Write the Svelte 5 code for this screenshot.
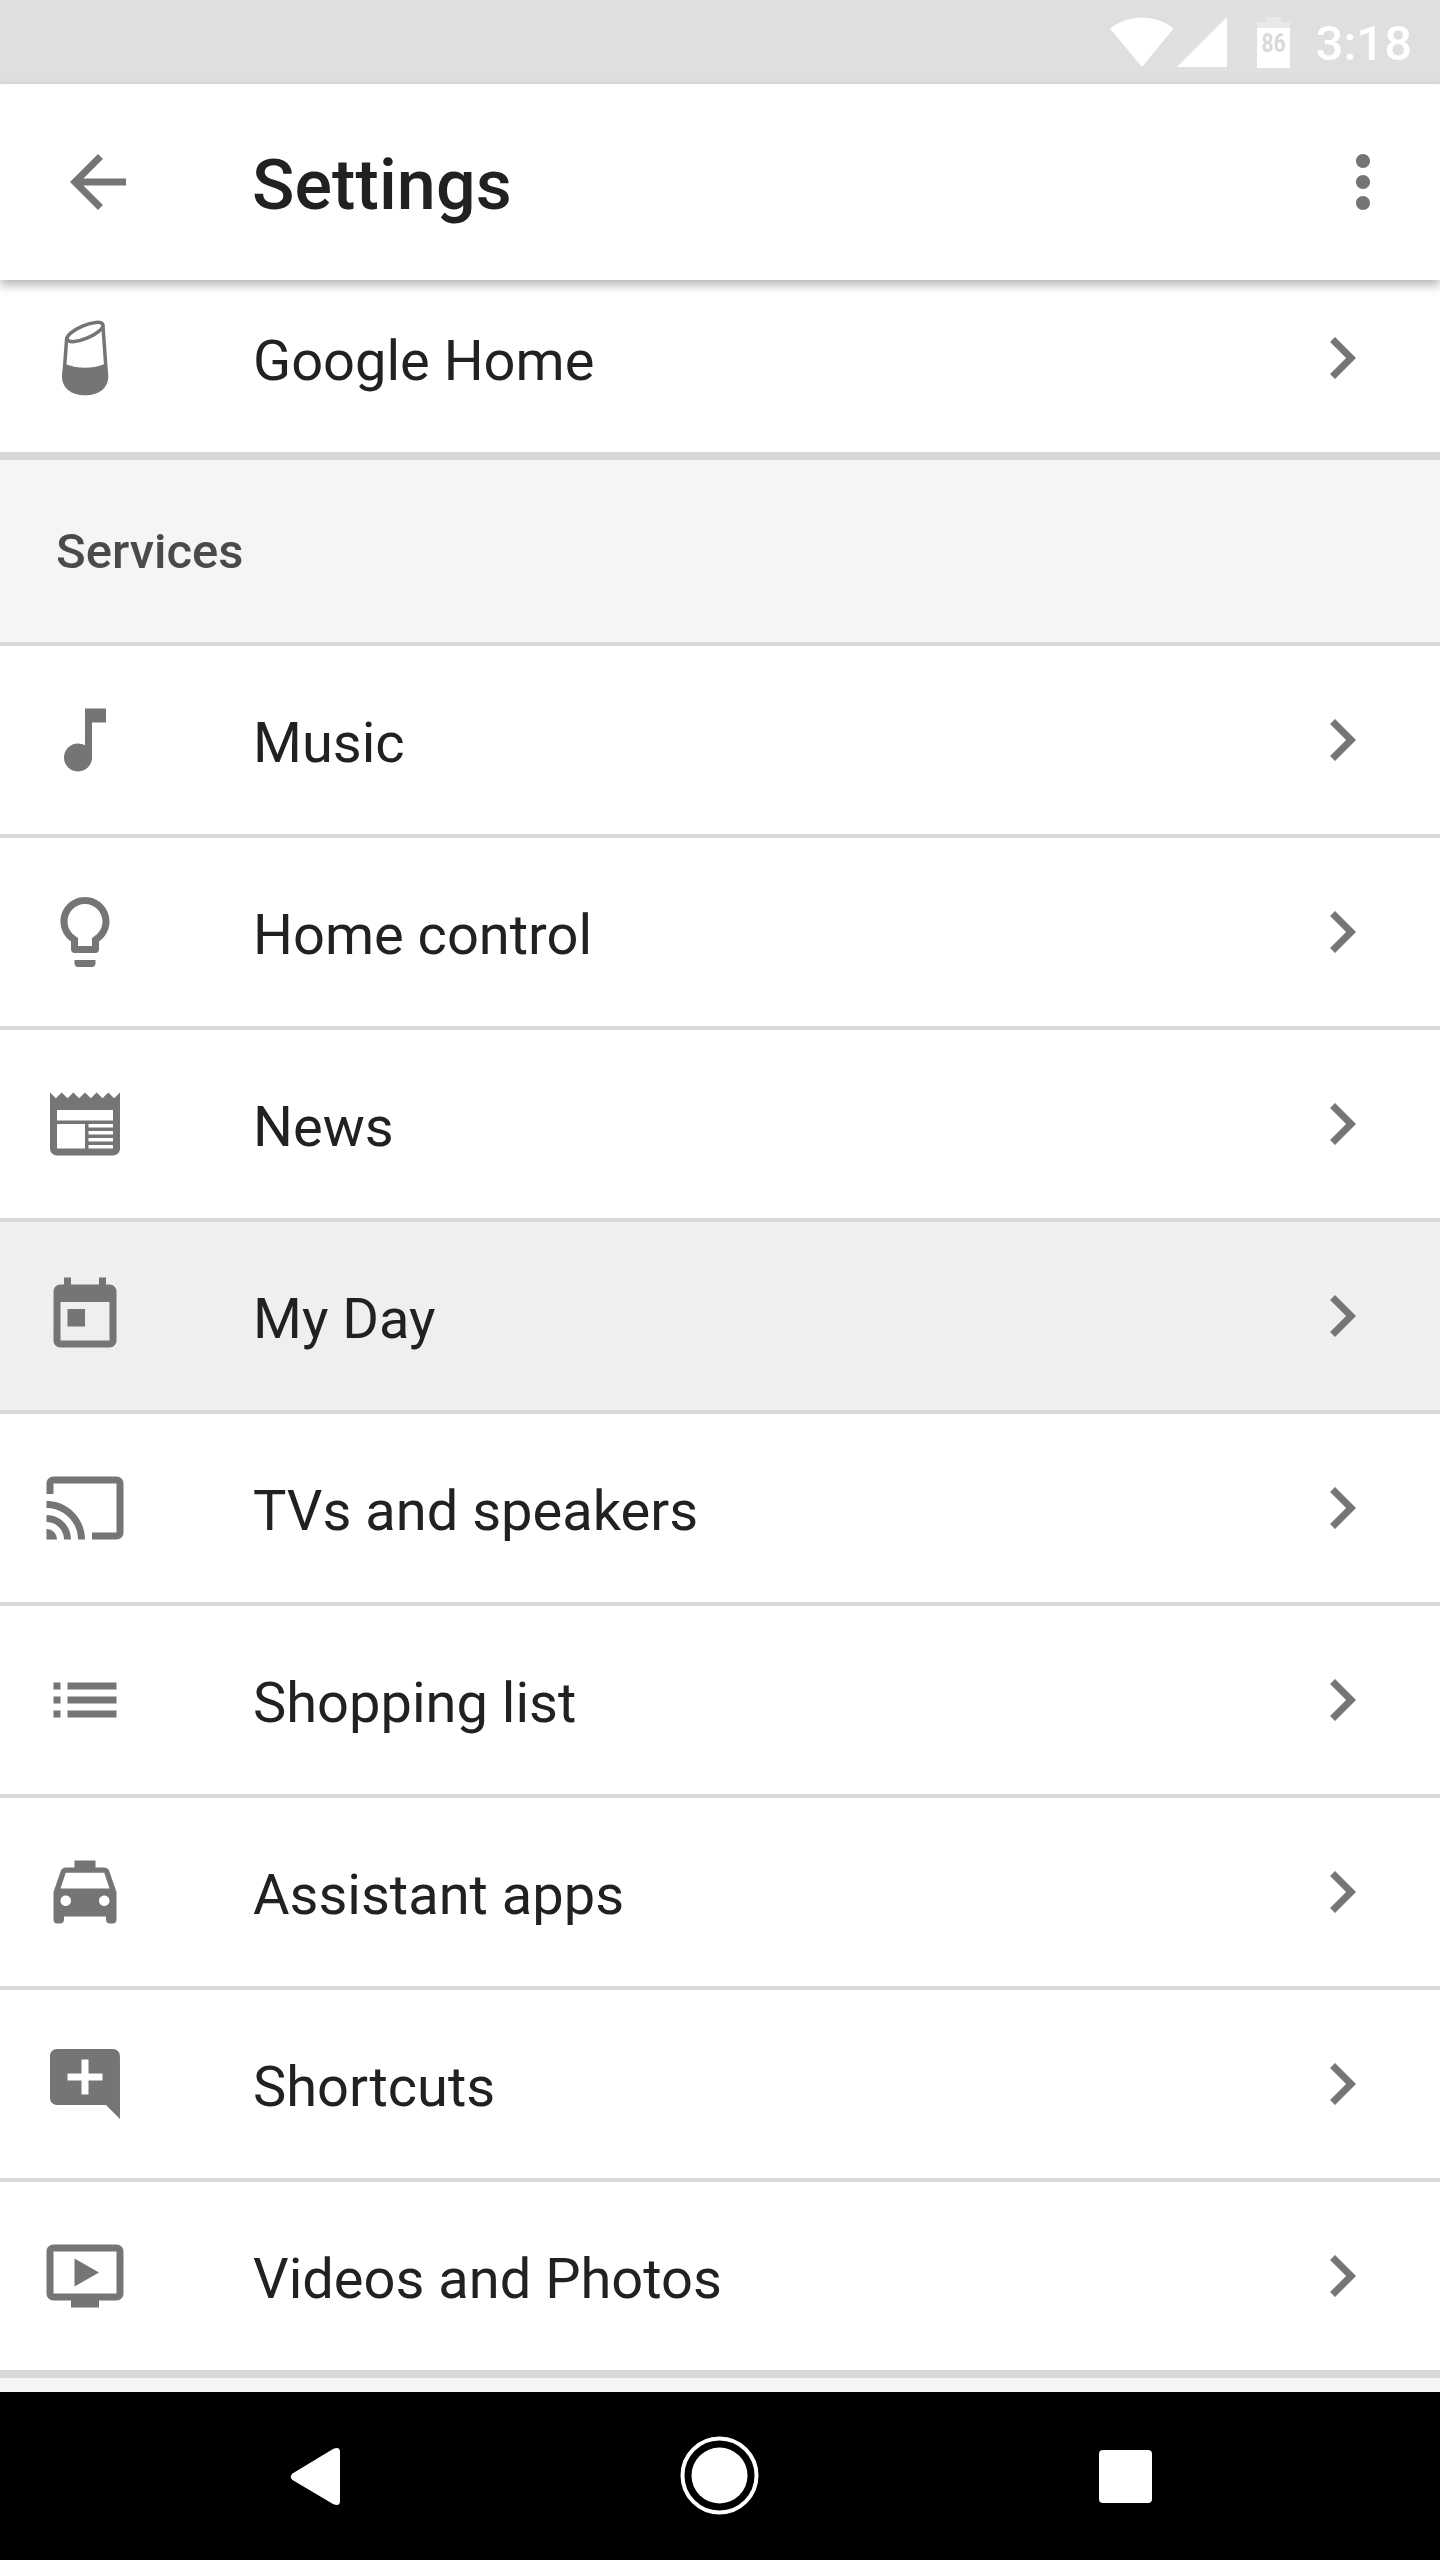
<script>
  const services = [
    { label: 'Music', icon: 'M12 3v10.55c-.59-.34-1.27-.55-2-.55-2.21 0-4 1.79-4 4s1.79 4 4 4 4-1.79 4-4V7h4V3h-6z' },
    { label: 'Home control', icon: 'M9 21c0 .55.45 1 1 1h4c.55 0 1-.45 1-1v-1H9v1zm3-19C8.14 2 5 5.14 5 9c0 2.38 1.19 4.47 3 5.74V17c0 .55.45 1 1 1h6c.55 0 1-.45 1-1v-2.26c1.81-1.27 3-3.36 3-5.74 0-3.86-3.14-7-7-7zm2.85 11.1l-.85.6V16h-4v-2.3l-.85-.6C7.8 12.16 7 10.63 7 9c0-2.76 2.24-5 5-5s5 2.24 5 5c0 1.63-.8 3.16-2.15 4.1z' },
    { label: 'News', icon: 'M22 3l-1.67 1.67L18.67 3 17 4.67 15.33 3l-1.66 1.67L12 3l-1.67 1.67L8.67 3 7 4.67 5.33 3 3.67 4.67 2 3v16c0 1.1.9 2 2 2h16c1.1 0 2-.9 2-2V3zM4 8h16v3H4V8zm0 4h8v7H4v-7zm9 0h7v1h-7v-1zm0 2h7v1h-7v-1zm0 2h7v1h-7v-1zm0 2h7v1h-7v-1z' },
    { label: 'My Day', icon: 'M19 3h-1V1h-2v2H8V1H6v2H5c-1.11 0-1.99.9-1.99 2L3 19c0 1.1.89 2 2 2h14c1.1 0 2-.9 2-2V5c0-1.1-.9-2-2-2zm0 16H5V8h14v11zM7 10h5v5H7z', pressed: true },
    { label: 'TVs and speakers', icon: 'M21 3H3c-1.1 0-2 .9-2 2v3h2V5h18v14h-7v2h7c1.1 0 2-.9 2-2V5c0-1.1-.9-2-2-2zM1 18v3h3c0-1.66-1.34-3-3-3zm0-4v2c2.76 0 5 2.24 5 5h2c0-3.87-3.13-7-7-7zm0-4v2c4.97 0 9 4.03 9 9h2c0-6.08-4.93-11-11-11z' },
    { label: 'Shopping list', icon: 'M3 13h2v-2H3v2zm0 4h2v-2H3v2zm0-8h2V7H3v2zm4 4h14v-2H7v2zm0 4h14v-2H7v2zM7 7v2h14V7H7z' },
    { label: 'Assistant apps', icon: 'M18.92 6.01C18.72 5.42 18.16 5 17.5 5H15V3H9v2H6.5c-.66 0-1.21.42-1.42 1.01L3 12v8c0 .55.45 1 1 1h1c.55 0 1-.45 1-1v-1h12v1c0 .55.45 1 1 1h1c.55 0 1-.45 1-1v-8l-2.08-5.99zM6.5 16c-.83 0-1.5-.67-1.5-1.5S5.67 13 6.5 13s1.5.67 1.5 1.5S7.33 16 6.5 16zm11 0c-.83 0-1.5-.67-1.5-1.5s.67-1.5 1.5-1.5 1.5.67 1.5 1.5-.67 1.5-1.5 1.5zM5 11l1.5-4.5h11L19 11H5z' },
    { label: 'Shortcuts', icon: 'M21.99 4c0-1.1-.89-2-1.99-2H4c-1.1 0-2 .9-2 2v12c0 1.1.9 2 2 2h14l4 4-.01-18zM17 11h-4v4h-2v-4H7V9h4V5h2v4h4v2z' },
    { label: 'Videos and Photos', icon: 'M21 3H3c-1.11 0-2 .89-2 2v12c0 1.1.89 2 2 2h5v2h8v-2h5c1.1 0 1.99-.9 1.99-2L23 5c0-1.11-.9-2-2-2zm0 14H3V5h18v12zm-5-6l-7 4V7z' }
  ];
</script>

{#snippet chevron()}
  <svg class="icon" viewBox="0 0 24 24">
    <path d="M10 6L8.59 7.41 13.17 12l-4.58 4.59L10 18l6-6z" />
  </svg>
{/snippet}

<div class="screen">
  <div class="status-bar">
    <svg class="wifi" viewBox="0 0 64 50">
      <path d="M0 11.5Q14 .5 32 .5T63.5 11.5L32 50z" />
    </svg>
    <svg class="signal" viewBox="0 0 50 50">
      <path d="M50 0v50H0z" />
    </svg>
    <svg class="battery" viewBox="0 0 33 51">
      <path class="battery-empty" d="M9 0h15v5h9v7H0V5h9z" />
      <path d="M0 11h33v40H0z" />
      <text x="16.5" y="34.5" text-anchor="middle" textLength="24" lengthAdjust="spacingAndGlyphs">86</text>
    </svg>
    <span class="clock">3:18</span>
  </div>

  <header class="app-bar">
    <svg class="icon" viewBox="0 0 24 24">
      <path d="M20 11H7.83l5.59-5.59L12 4l-8 8 8 8 1.41-1.41L7.83 13H20v-2z" />
    </svg>
    <h1 class="title">Settings</h1>
    <svg class="icon" viewBox="0 0 24 24">
      <path d="M12 8c1.1 0 2-.9 2-2s-.9-2-2-2-2 .9-2 2 .9 2 2 2zm0 2c-1.1 0-2 .9-2 2s.9 2 2 2 2-.9 2-2-.9-2-2-2zm0 6c-1.1 0-2 .9-2 2s.9 2 2 2 2-.9 2-2-.9-2-2-2z" />
    </svg>
  </header>

  <main class="content">
    <div class="row device">
      <svg class="icon" viewBox="0 0 84 84">
        <path d="M20.5 47.500Q42 56 63.500 47.500L65.300 60.500C65.300 72 56 79.300 42.200 79.300S19 72 19 60.500z" />
        <path class="outline" d="M23.800 21L20.900 60M59.900 9L63.500 60" />
        <ellipse class="outline" cx="42" cy="16" rx="19.300" ry="6.500" transform="rotate(-23 42 16)" />
      </svg>
      <span class="label">Google Home</span>
      {@render chevron()}
    </div>

    <h2 class="section">Services</h2>

    {#each services as service}
      <div class="row" class:pressed={service.pressed}>
        <svg class="icon" viewBox="0 0 24 24">
          <path fill-rule="evenodd" d={service.icon} />
        </svg>
        <span class="label">{service.label}</span>
        {@render chevron()}
      </div>
    {/each}
  </main>

  <nav class="nav-bar">
    <svg viewBox="0 0 80 80">
      <path d="M17.500 37.500L58 13q7-3 7 3v49q0 6-7 3L17.500 44q-3.500-3.200 0-6.500z" />
    </svg>
    <svg viewBox="0 0 80 80">
      <circle class="ring" cx="39.500" cy="39.500" r="37" />
      <circle cx="39.500" cy="39.500" r="28" />
    </svg>
    <svg viewBox="0 0 80 80">
      <rect x="14" y="14" width="53" height="53" rx="4" />
    </svg>
  </nav>
</div>

<style>
  :global(body) {
    margin: 0;
    background: #f5f5f5;
  }

  .screen {
    display: flex;
    flex-direction: column;
    width: 1440px;
    height: 2560px;
    overflow: hidden;
    font-family: Roboto, sans-serif;
    color: #212121;
    background: #f5f5f5;
  }

  .status-bar {
    display: flex;
    flex-shrink: 0;
    align-items: center;
    justify-content: flex-end;
    box-sizing: border-box;
    height: 84px;
    padding-right: 28px;
    background: #dfdfdf;
    fill: #fff;
    color: #fff;
  }

  .wifi {
    width: 64px;
    height: 50px;
    margin-right: 3px;
  }

  .signal {
    width: 50px;
    height: 50px;
    margin-right: 30px;
  }

  .battery {
    width: 33px;
    height: 51px;
    margin-right: 26px;
  }

  .battery-empty {
    fill: #e9e9e9;
  }

  .battery text {
    font-size: 25px;
    font-weight: 700;
    fill: #d9d9d9;
  }

  .clock {
    padding-top: 3px;
    font-size: 49px;
    font-weight: 500;
    line-height: 1;
  }

  .app-bar {
    position: relative;
    z-index: 1;
    display: flex;
    flex-shrink: 0;
    align-items: center;
    box-sizing: border-box;
    height: 196px;
    padding: 0 35px 0 56px;
    background: #fff;
    box-shadow: 0 5px 10px rgba(0, 0, 0, 0.3);
  }

  .icon {
    flex-shrink: 0;
    width: 84px;
    height: 84px;
    fill: #757575;
  }

  .outline {
    fill: none;
    stroke: #757575;
    stroke-width: 3.5;
  }

  .title {
    flex: 1;
    margin: 0;
    padding: 6px 0 0 112px;
    font-size: 70px;
    font-weight: 500;
    line-height: 84px;
    letter-spacing: 0.1px;
  }

  .content {
    flex: 1;
    min-height: 0;
    overflow: hidden;
  }

  .row {
    display: flex;
    align-items: center;
    height: 188px;
    padding: 0 56px 0 43px;
    border-bottom: 4px solid #d8d8d8;
    background: #fff;
  }

  /* scrolled partly under the app bar */
  .device {
    margin-top: -16px;
  }

  .device,
  .row:last-child {
    border-bottom-width: 8px;
  }

  .pressed {
    background: #efefef;
  }

  .label {
    flex: 1;
    padding: 6px 0 0 126px;
    font-size: 56px;
    line-height: 66px;
  }

  .section {
    margin: 0;
    padding: 2px 0 0 56px;
    border-bottom: 4px solid #d8d8d8;
    background: #f5f5f5;
    color: #4a4a4a;
    font-size: 49px;
    font-weight: 500;
    line-height: 180px;
  }

  .nav-bar {
    display: grid;
    flex-shrink: 0;
    grid-template-columns: repeat(3, 405px);
    align-items: center;
    justify-content: center;
    justify-items: center;
    height: 168px;
    background: #000;
    fill: #fff;
  }

  .nav-bar svg {
    width: 80px;
    height: 80px;
  }

  .ring {
    fill: none;
    stroke: #fff;
    stroke-width: 4;
  }
</style>
